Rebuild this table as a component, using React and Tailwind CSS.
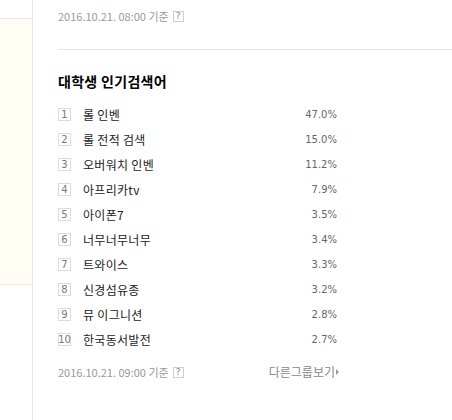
import React from 'react';

const rankings = [
  { name: '롤 인벤', rate: '47.0%' },
  { name: '롤 전적 검색', rate: '15.0%' },
  { name: '오버워치 인벤', rate: '11.2%' },
  { name: '아프리카tv', rate: '7.9%' },
  { name: '아이폰7', rate: '3.5%' },
  { name: '너무너무너무', rate: '3.4%' },
  { name: '트와이스', rate: '3.3%' },
  { name: '신경섬유종', rate: '3.2%' },
  { name: '뮤 이그니션', rate: '2.8%' },
  { name: '한국동서발전', rate: '2.7%' },
];

const font = { fontFamily: '"Noto Sans CJK KR", "Noto Sans", sans-serif' };

function HelpBox() {
  return (
    <span className="inline-flex items-center justify-center w-[11px] h-[11px] border border-[#cfcfcf] text-[9px] leading-none text-[#888] ml-[4px] font-[family-name:'DejaVu_Sans',sans-serif]">
      ?
    </span>
  );
}

function DateLine({ time }) {
  return (
    <div className="flex items-center text-[11px] text-[#999]">
      <span>2016.10.21. {time} 기준</span>
      <HelpBox />
    </div>
  );
}

export default function App() {
  return (
    <div className="flex h-[420px] w-[452px] bg-white overflow-hidden" style={font}>
      <div className="w-[33px] shrink-0 border-r border-[#e5e5e5]">
        <div className="h-[18px]"></div>
        <div className="h-[267px] bg-[#fffdf4] border-t border-b border-t-[#e5e5e5] border-b-[#eeecd8]"></div>
      </div>
      <div className="flex-1 flex flex-col">
        <div className="h-[32px] pl-[25px] flex items-center">
          <DateLine time="08:00" />
        </div>
        <div className="mt-[17px] ml-[25px] border-t border-[#e8e8e8]"></div>
        <div className="pl-[25px] w-[304px]">
          <h3 className="mt-[20px] h-[22px] flex items-center text-[14px] font-bold text-black tracking-[0.3px]">
            대학생 인기검색어
          </h3>
          <ol className="mt-[10px]">
            {rankings.map((item, i) => (
              <li key={i} className="h-[25px] flex items-center">
                <span className="w-[13px] h-[13px] border border-[#dcdcdc] flex items-center justify-center text-[10px] leading-none text-[#777] font-[family-name:'DejaVu_Sans',sans-serif]">
                  {i + 1}
                </span>
                <span className="ml-[12px] flex-1 text-[12px] text-[#222] tracking-[0.3px]">{item.name}</span>
                <span className="text-[10px] text-[#666] font-[family-name:'DejaVu_Sans',sans-serif]">{item.rate}</span>
              </li>
            ))}
          </ol>
          <div className="h-[40px] flex items-center justify-between">
            <DateLine time="09:00" />
            <a className="flex items-center text-[12px] text-[#888] mr-[-2px]">
              다른그룹보기
              <span className="ml-[1px] w-0 h-0 border-y-[3px] border-y-transparent border-l-[3px] border-l-[#999]"></span>
            </a>
          </div>
        </div>
      </div>
    </div>
  );
}
